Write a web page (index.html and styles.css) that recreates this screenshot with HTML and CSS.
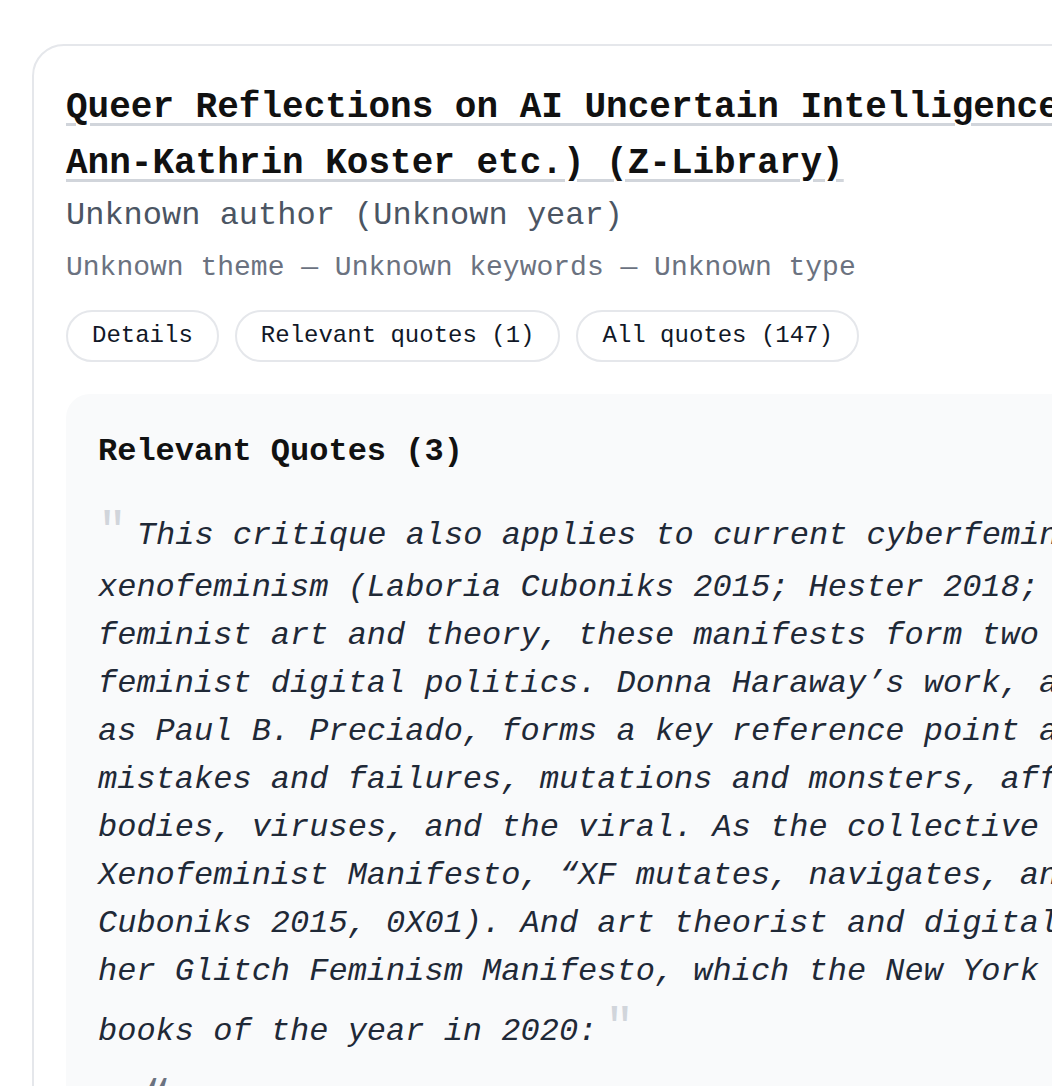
FILE: index.html
```html
<!DOCTYPE html>
<html lang="en">
<head>
<meta charset="utf-8">
<title>Queer Reflections on AI</title>
<link rel="stylesheet" href="styles.css">
</head>
<body>
<div class="page">
  <article class="card">
    <h1 class="title"><a class="title-link" href="#">Queer Reflections on AI Uncertain Intelligences (Michael Klipphahn-Karge, Ann-Kathrin Koster etc.) (Z-Library)</a></h1>
    <p class="author">Unknown author (Unknown year)</p>
    <p class="meta">Unknown theme — Unknown keywords — Unknown type</p>
    <div class="tabs">
      <button class="tab" type="button">Details</button>
      <button class="tab" type="button">Relevant quotes (1)</button>
      <button class="tab" type="button">All quotes (147)</button>
    </div>
    <section class="quotes">
      <h2 class="quotes-title">Relevant Quotes (3)</h2>
      <blockquote class="quote"><span class="mark mark-open">"</span>This critique also applies to current cyberfeminist theories such as glitch and xenofeminism (Laboria Cuboniks 2015; Hester 2018; Russell 2020). Rooted in feminist art and theory, these manifests form two important positions within feminist digital politics. Donna Haraway’s work, as well as that of theorists such as Paul B. Preciado, forms a key reference point as they both explicitly address mistakes and failures, mutations and monsters, affirming the queer potential of bodies, viruses, and the viral. As the collective Laboria Cuboniks writes in the Xenofeminist Manifesto, “XF mutates, navigates, and probes every horizon” (Laboria Cuboniks 2015, 0X01). And art theorist and digital artist Legacy Russell writes in her Glitch Feminism Manifesto, which the New York Times listed as one of the best books of the year in 2020:<span class="mark mark-close">"</span></blockquote>
      <blockquote class="quote quote-next"><span class="mark mark-dark">“</span>Glitch feminism embraces the causality of error and turns the gloomy implication of glitch on its ear.</blockquote>
    </section>
  </article>
</div>
</body>
</html>
```

FILE: styles.css
```css
html, body {
  margin: 0;
  padding: 0;
  overflow: hidden;
  background: #ffffff;
}

body {
  font-family: "Liberation Mono", "Courier New", monospace;
  color: #111111;
}

.page {
  padding: 44px 0 0 32px;
  width: 1800px;
}

.card {
  width: 1644px;
  padding: 34px 32px 32px 32px;
  border: 2px solid #e5e7eb;
  border-radius: 32px;
  background: #ffffff;
}

.title {
  margin: 0;
  font-size: 36px;
  line-height: 56px;
  font-weight: 700;
}

.title-link {
  color: #111111;
  text-decoration: underline;
  text-decoration-color: #d1d5db;
  text-decoration-thickness: 3px;
  text-underline-offset: 6px;
}

.author {
  margin: 0;
  font-size: 32px;
  line-height: 48px;
  color: #4b5563;
}

.meta {
  margin: 7px 0 0 0;
  font-size: 28px;
  line-height: 42px;
  color: #6b7280;
}

.tabs {
  display: flex;
  gap: 16px;
  margin-top: 21px;
}

.tab {
  font-family: "Liberation Mono", "Courier New", monospace;
  font-size: 24px;
  line-height: 32px;
  padding: 8px 24px;
  border: 2px solid #e5e7eb;
  border-radius: 999px;
  background: #ffffff;
  color: #111827;
  cursor: pointer;
}

.quotes {
  margin-top: 32px;
  padding: 34px 32px 32px 32px;
  background: #f9fafb;
  border-radius: 24px;
}

.quotes-title {
  margin: 0;
  font-size: 32px;
  line-height: 48px;
  font-weight: 700;
  color: #111111;
}

.quote {
  margin: 24px 0 0 0;
  font-size: 32px;
  line-height: 48px;
  font-style: italic;
  color: #1f2937;
}

.quote-next {
  margin-top: 8px;
}

.mark {
  font-size: 48px;
  line-height: 64px;
  vertical-align: -1px;
  font-style: normal;
  color: #d1d5db;
}

.mark-open {
  margin-right: 10px;
}

.mark-close {
  margin-left: 8px;
}

.mark-dark {
  color: #6b7280;
  margin-left: 44px;
  margin-right: 6px;
}
```
